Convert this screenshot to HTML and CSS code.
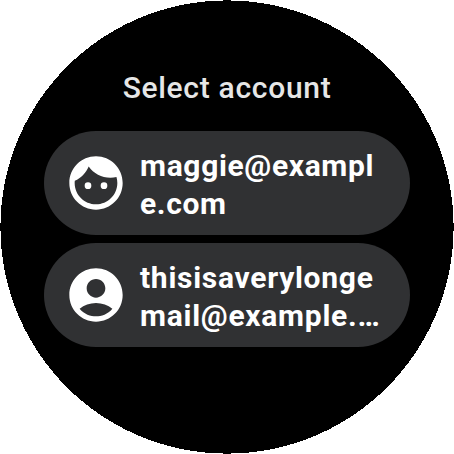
FILE: index.html
```
<!DOCTYPE html>
<html lang="en">
<head>
<meta charset="utf-8">
<title>Select account</title>
<link rel="stylesheet" href="styles.css">
</head>
<body>
<main class="watch">
  <h1 class="title">Select account</h1>
  <div class="chips">
    <button class="chip">
      <svg class="icon" viewBox="0 0 24 24"><path d="M9 11.750a1.250 1.250 0 1 0 0 2.500 1.250 1.250 0 0 0 0-2.500zm6 0a1.250 1.250 0 1 0 0 2.500 1.250 1.250 0 0 0 0-2.500zM12 2C6.480 2 2 6.480 2 12s4.480 10 10 10 10-4.480 10-10S17.520 2 12 2zm0 18c-4.410 0-8-3.590-8-8 0-.29.02-.58.05-.86 2.360-1.050 4.230-2.980 5.210-5.370C11.070 8.330 14.050 10 17.420 10c.78 0 1.530-.09 2.250-.26.21.71.33 1.470.33 2.260 0 4.410-3.590 8-8 8z"/></svg>
      <span class="label">maggie@exampl<br>e.com</span>
    </button>
    <button class="chip">
      <svg class="icon" viewBox="0 0 24 24"><path d="M12 2C6.480 2 2 6.480 2 12s4.480 10 10 10 10-4.480 10-10S17.520 2 12 2zm0 4c1.930 0 3.500 1.570 3.500 3.500S13.930 13 12 13s-3.500-1.570-3.500-3.500S10.070 6 12 6zm0 14c-2.030 0-4.430-.82-6.140-2.880C7.550 15.800 9.680 15 12 15s4.450.8 6.140 2.120C16.430 19.180 14.030 20 12 20z"/></svg>
      <span class="label label-long">thisisaverylonge<br>mail@example.…</span>
    </button>
  </div>
</main>
</body>
</html>
```
FILE: styles.css
```
body {
  margin: 0;
  background: #fff;
  font-family: Roboto, sans-serif;
}
.watch {
  box-sizing: border-box;
  width: 454px;
  height: 454px;
  padding: 69px 44px 0;
  background: radial-gradient(circle 226.54px at center, #000 100%, #fff 100%);
  overflow: hidden;
}
.title {
  margin: 0;
  height: 62px;
  color: #e6e6e6;
  font-size: 30px;
  font-weight: 500;
  line-height: 38px;
  letter-spacing: 0.7px;
  text-align: center;
}
.chips {
  display: flex;
  flex-direction: column;
  gap: 8px;
}
.chip {
  display: flex;
  align-items: center;
  gap: 12px;
  height: 104px;
  padding: 0 28px 0 20px;
  border: 0;
  border-radius: 52px;
  background: #303133;
  color: #fff;
  font: 700 30px/38px Roboto, sans-serif;
  letter-spacing: 0.65px;
  text-align: left;
}
.icon {
  flex: none;
  width: 64px;
  height: 64px;
  fill: #fff;
}
.label {
  padding-top: 4px;
  white-space: nowrap;
}
.label-long {
  letter-spacing: 0.72px;
}
```
